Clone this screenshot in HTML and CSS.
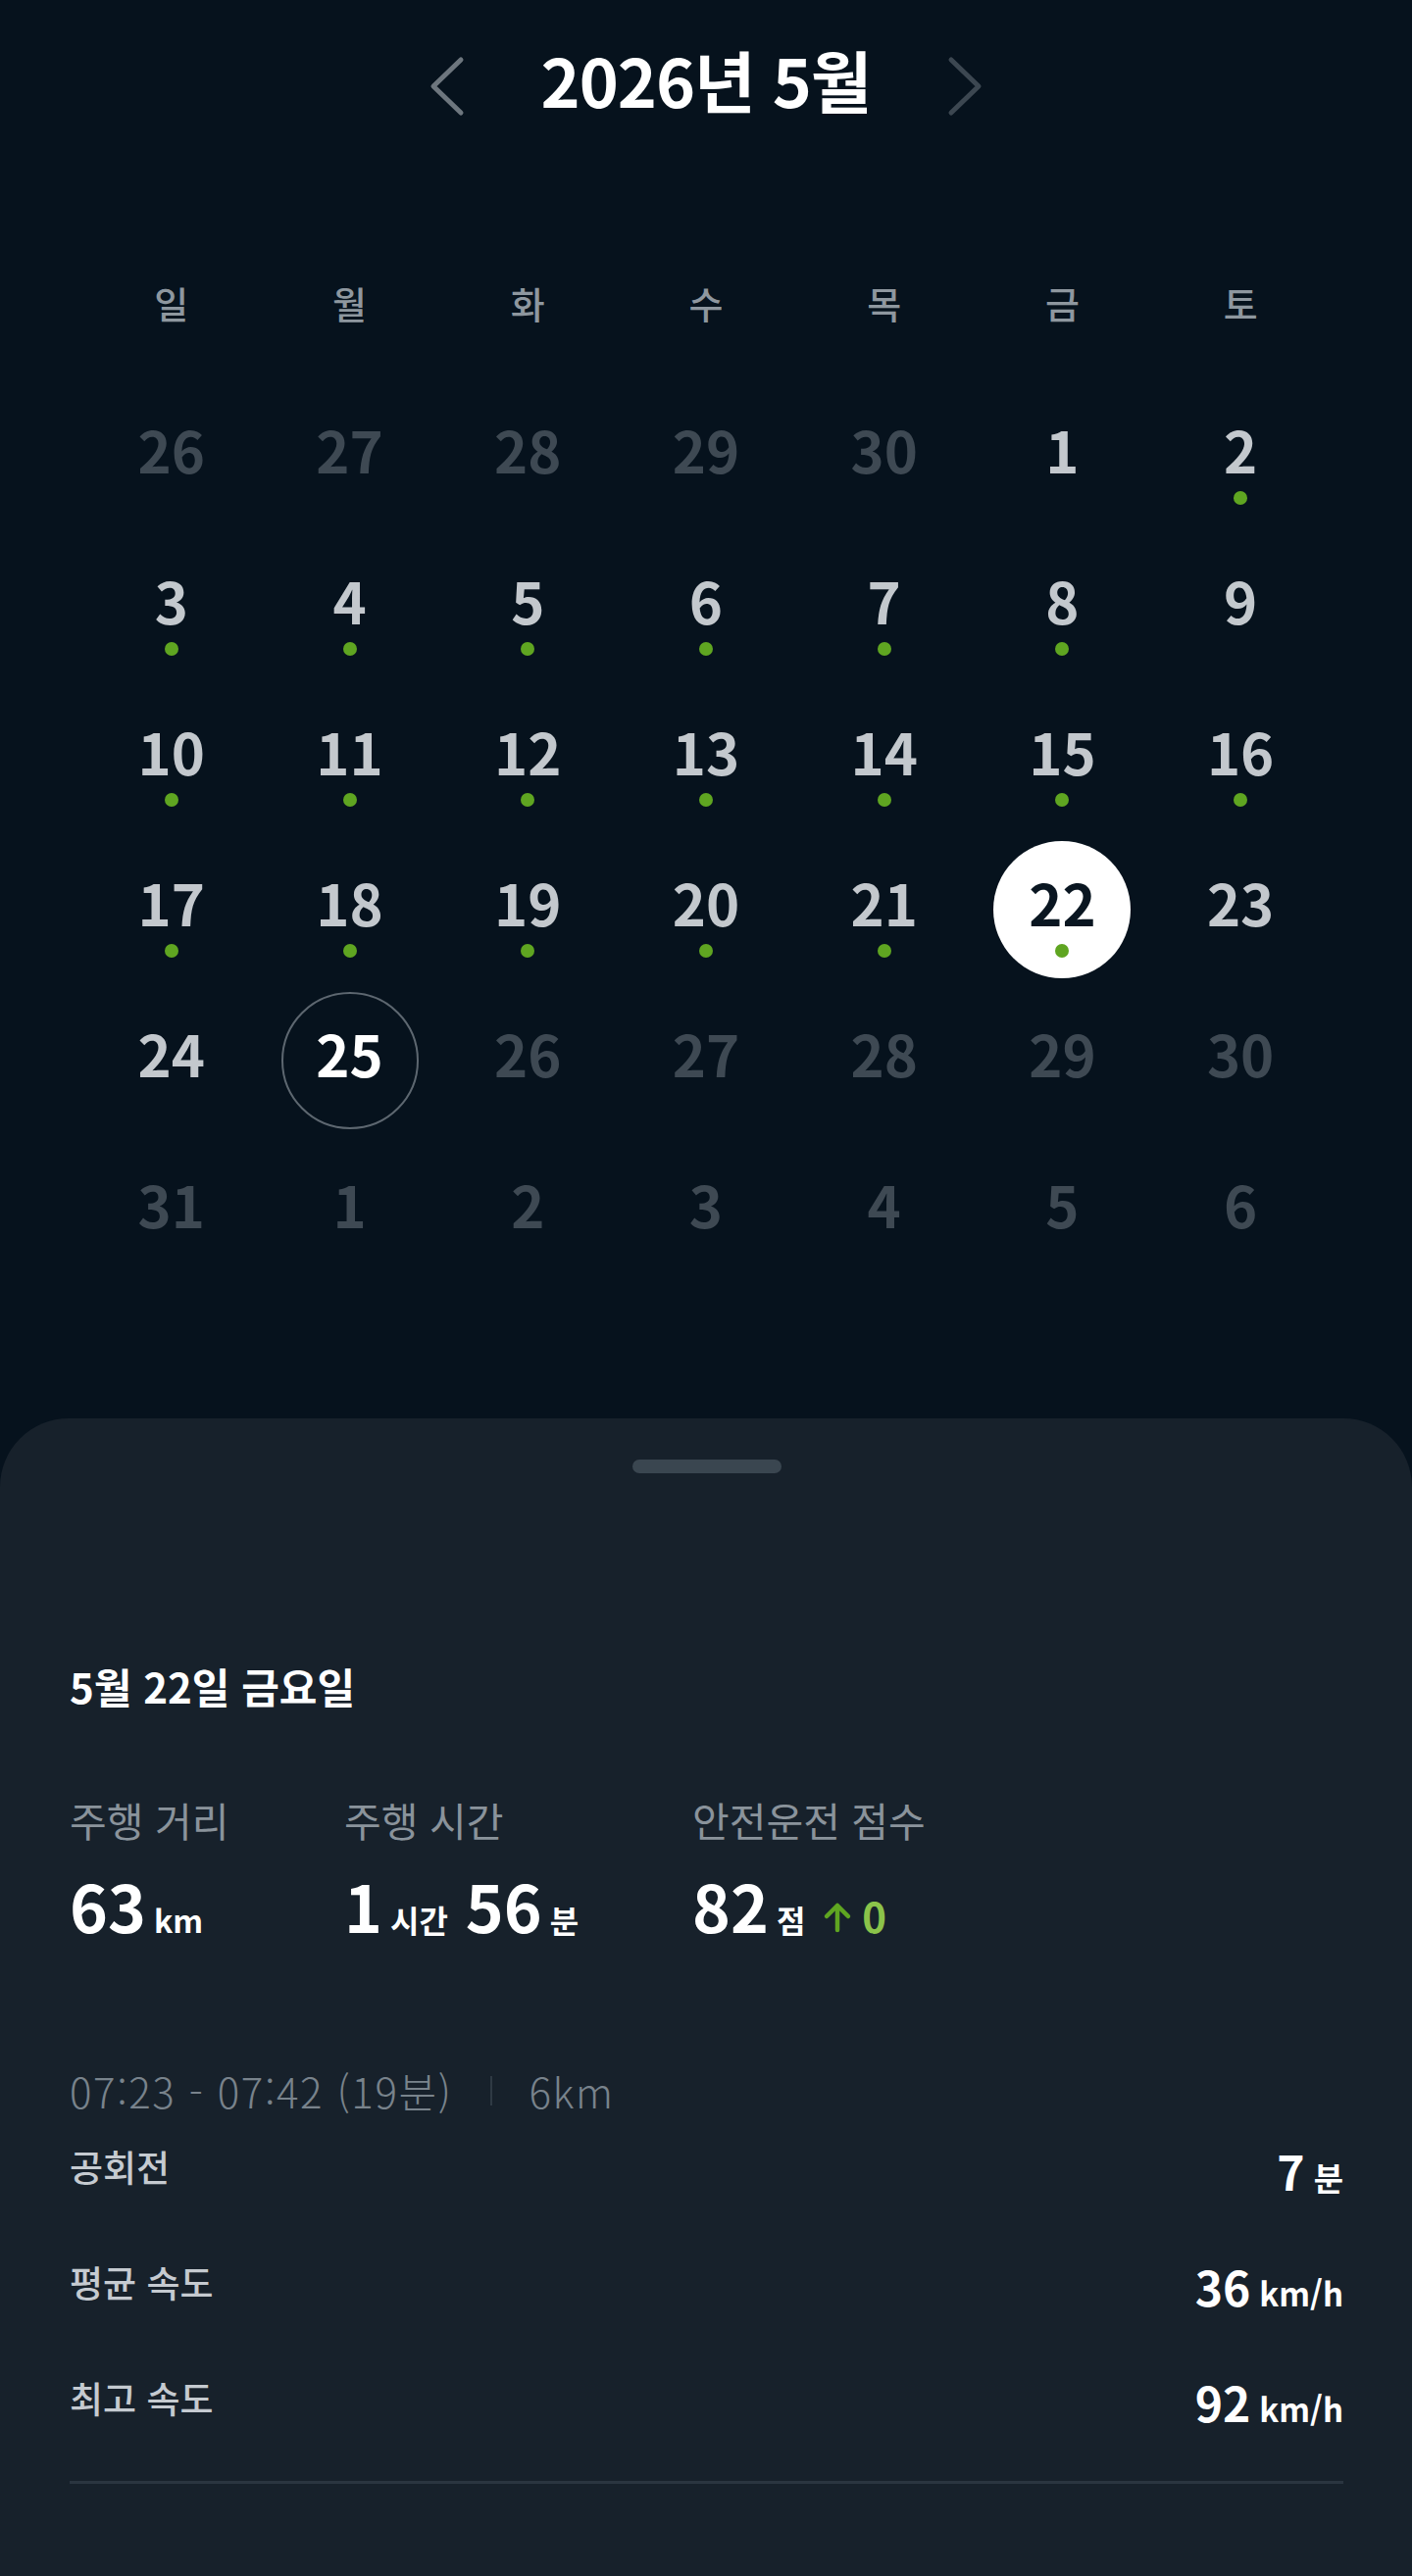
FILE: index.html
```html
<!DOCTYPE html>
<html lang="ko">

<head>
  <meta charset="UTF-8">
  <meta name="viewport" content="width=device-width, initial-scale=1.0">
  <title>주행 기록</title>
  <link rel="stylesheet" href="styles.css">
</head>

<body>
  <header class="month-bar">
    <button class="nav-btn nav-prev" aria-label="이전 달">
      <svg viewBox="0 0 40 64" width="40" height="64"><path d="M34 5 L6 32 L34 59" /></svg>
    </button>
    <h1 class="month-title">2026년 5월</h1>
    <button class="nav-btn nav-next" aria-label="다음 달">
      <svg viewBox="0 0 40 64" width="40" height="64"><path d="M6 5 L34 32 L6 59" /></svg>
    </button>
  </header>

  <section class="calendar">
    <div class="weekdays">
      <span>일</span><span>월</span><span>화</span><span>수</span><span>목</span><span>금</span><span>토</span>
    </div>

    <div class="days">
      <div class="cell"><span class="day muted">26</span></div>
      <div class="cell"><span class="day muted">27</span></div>
      <div class="cell"><span class="day muted">28</span></div>
      <div class="cell"><span class="day muted">29</span></div>
      <div class="cell"><span class="day muted">30</span></div>
      <div class="cell"><span class="day">1</span></div>
      <div class="cell"><span class="day has-trip">2</span></div>

      <div class="cell"><span class="day has-trip">3</span></div>
      <div class="cell"><span class="day has-trip">4</span></div>
      <div class="cell"><span class="day has-trip">5</span></div>
      <div class="cell"><span class="day has-trip">6</span></div>
      <div class="cell"><span class="day has-trip">7</span></div>
      <div class="cell"><span class="day has-trip">8</span></div>
      <div class="cell"><span class="day">9</span></div>

      <div class="cell"><span class="day has-trip">10</span></div>
      <div class="cell"><span class="day has-trip">11</span></div>
      <div class="cell"><span class="day has-trip">12</span></div>
      <div class="cell"><span class="day has-trip">13</span></div>
      <div class="cell"><span class="day has-trip">14</span></div>
      <div class="cell"><span class="day has-trip">15</span></div>
      <div class="cell"><span class="day has-trip">16</span></div>

      <div class="cell"><span class="day has-trip">17</span></div>
      <div class="cell"><span class="day has-trip">18</span></div>
      <div class="cell"><span class="day has-trip">19</span></div>
      <div class="cell"><span class="day has-trip">20</span></div>
      <div class="cell"><span class="day has-trip">21</span></div>
      <div class="cell"><span class="day has-trip selected">22</span></div>
      <div class="cell"><span class="day">23</span></div>

      <div class="cell"><span class="day">24</span></div>
      <div class="cell"><span class="day today">25</span></div>
      <div class="cell"><span class="day muted">26</span></div>
      <div class="cell"><span class="day muted">27</span></div>
      <div class="cell"><span class="day muted">28</span></div>
      <div class="cell"><span class="day muted">29</span></div>
      <div class="cell"><span class="day muted">30</span></div>

      <div class="cell"><span class="day muted">31</span></div>
      <div class="cell"><span class="day muted">1</span></div>
      <div class="cell"><span class="day muted">2</span></div>
      <div class="cell"><span class="day muted">3</span></div>
      <div class="cell"><span class="day muted">4</span></div>
      <div class="cell"><span class="day muted">5</span></div>
      <div class="cell"><span class="day muted">6</span></div>
    </div>
  </section>

  <section class="sheet">
    <div class="handle"></div>

    <h2 class="sheet-date">5월 22일 금요일</h2>

    <div class="stats">
      <div class="stat stat-distance">
        <div class="stat-label">주행 거리</div>
        <div class="stat-value"><span class="num">63</span><span class="unit">km</span></div>
      </div>
      <div class="stat stat-time">
        <div class="stat-label">주행 시간</div>
        <div class="stat-value"><span class="num">1</span><span class="unit">시간</span><span class="num gap">56</span><span class="unit">분</span></div>
      </div>
      <div class="stat">
        <div class="stat-label">안전운전 점수</div>
        <div class="stat-value">
          <span class="num">82</span><span class="unit">점</span>
          <svg class="up-arrow" viewBox="0 0 30 32" width="30" height="32"><path d="M15 29 V4 M4 15 L15 4 L26 15" /></svg>
          <span class="delta">0</span>
        </div>
      </div>
    </div>

    <div class="trip-detail">
      <div class="trip-time">07:23 - 07:42 (19분)<span class="sep"></span>6km</div>
      <div class="trip-row">
        <span class="row-label">공회전</span>
        <span class="row-value"><span class="num">7</span><span class="unit">분</span></span>
      </div>
      <div class="trip-row">
        <span class="row-label">평균 속도</span>
        <span class="row-value"><span class="num">36</span><span class="unit">km/h</span></span>
      </div>
      <div class="trip-row">
        <span class="row-label">최고 속도</span>
        <span class="row-value"><span class="num">92</span><span class="unit">km/h</span></span>
      </div>
    </div>

    <div class="divider"></div>
  </section>
</body>
</html>
```

FILE: styles.css
```css
body {
  font-family: 'Noto Sans CJK KR', 'Noto Sans', sans-serif;
  margin: 0;
  padding: 0;
  background-color: #06121d;
  color: #ffffff;
  height: 2628px;
  display: flex;
  flex-direction: column;
}

/* month header */

.month-bar {
  height: 170px;
  display: flex;
  align-items: center;
  justify-content: center;
  gap: 76px;
}

.month-title {
  margin: 0 0 8px 0;
  font-size: 68px;
  line-height: 80px;
  font-weight: 700;
  letter-spacing: -1px;
}

.nav-btn {
  background: none;
  border: none;
  padding: 0;
  margin-top: 5px;
  width: 40px;
  height: 64px;
  cursor: pointer;
}

.nav-btn svg {
  display: block;
  fill: none;
  stroke-width: 5;
  stroke-linecap: round;
  stroke-linejoin: round;
}

.nav-prev svg {
  stroke: #6d767e;
}

.nav-next svg {
  stroke: #3c4751;
}

/* calendar grid */

.calendar {
  padding: 0 84px;
}

.weekdays {
  margin-top: 104px;
  display: grid;
  grid-template-columns: repeat(7, 1fr);
  height: 70px;
  line-height: 70px;
  text-align: center;
  font-size: 38px;
  font-weight: 500;
  color: #8e979f;
}

.days {
  margin-top: 45px;
  display: grid;
  grid-template-columns: repeat(7, 1fr);
  grid-auto-rows: 154px;
}

.cell {
  display: flex;
  align-items: center;
  justify-content: center;
}

.day {
  position: relative;
  width: 140px;
  height: 140px;
  box-sizing: border-box;
  border-radius: 50%;
  display: flex;
  align-items: center;
  justify-content: center;
  padding-bottom: 16px;
  font-size: 58px;
  line-height: 60px;
  font-weight: 700;
  color: #c3c8cd;
}

.day.muted {
  color: #3e4953;
}

.day.has-trip::after {
  content: "";
  position: absolute;
  left: 63px;
  top: 105px;
  width: 14px;
  height: 14px;
  border-radius: 50%;
  background: #5fa521;
}

.day.selected {
  background: #ffffff;
  color: #0a1621;
}

.day.today {
  border: 2px solid #5d6770;
  color: #ffffff;
}

/* bottom sheet */

.sheet {
  flex: 1;
  margin-top: 134px;
  background: #17212b;
  border-radius: 70px 70px 0 0;
  padding: 42px 70px 0 71px;
}

.handle {
  width: 152px;
  height: 14px;
  border-radius: 7px;
  background: #3a4650;
  margin: 0 auto;
}

.sheet-date {
  margin: 187px 0 0 0;
  font-size: 42px;
  line-height: 60px;
  font-weight: 700;
}

.stats {
  margin-top: 78px;
  display: flex;
}

.stat-distance {
  width: 280px;
}

.stat-time {
  width: 355px;
}

.stat-label {
  font-size: 41px;
  line-height: 56px;
  font-weight: 400;
  color: #8a939b;
}

.stat-value {
  margin-top: 19px;
  height: 80px;
  display: flex;
  align-items: baseline;
  white-space: nowrap;
}

.stat-value .num {
  font-size: 66px;
  line-height: 80px;
  font-weight: 700;
}

.stat-value .num.gap {
  margin-left: 18px;
}

.stat-value .unit {
  margin-left: 8px;
  font-size: 32px;
  font-weight: 700;
}

.up-arrow {
  margin-left: 18px;
  align-self: center;
  margin-top: 26px;
  fill: none;
  stroke: #5fa521;
  stroke-width: 4.5;
  stroke-linecap: round;
  stroke-linejoin: round;
}

.delta {
  margin-left: 10px;
  font-size: 42px;
  font-weight: 700;
  color: #8bc34a;
}

/* trip detail */

.trip-detail {
  margin-top: 122px;
}

.trip-time {
  font-size: 42px;
  line-height: 56px;
  font-weight: 300;
  letter-spacing: 1.6px;
  color: #79838c;
  display: flex;
  align-items: center;
}

.sep {
  display: inline-block;
  width: 2px;
  height: 30px;
  background: #2f3a44;
  margin: 0 38px 0 38px;
}

.trip-row {
  margin-top: 4px;
  height: 90px;
  display: flex;
  align-items: center;
  justify-content: space-between;
}

.trip-row + .trip-row {
  margin-top: 28px;
}

.row-label {
  font-size: 37px;
  font-weight: 500;
  color: #c5cad0;
}

.row-value {
  display: flex;
  align-items: baseline;
  margin-top: 8px;
}

.row-value .num {
  font-size: 48px;
  font-weight: 700;
}

.row-value .unit {
  margin-left: 9px;
  font-size: 33px;
  font-weight: 700;
}

.divider {
  margin-top: 40px;
  height: 3px;
  background: #2a3540;
}
```
